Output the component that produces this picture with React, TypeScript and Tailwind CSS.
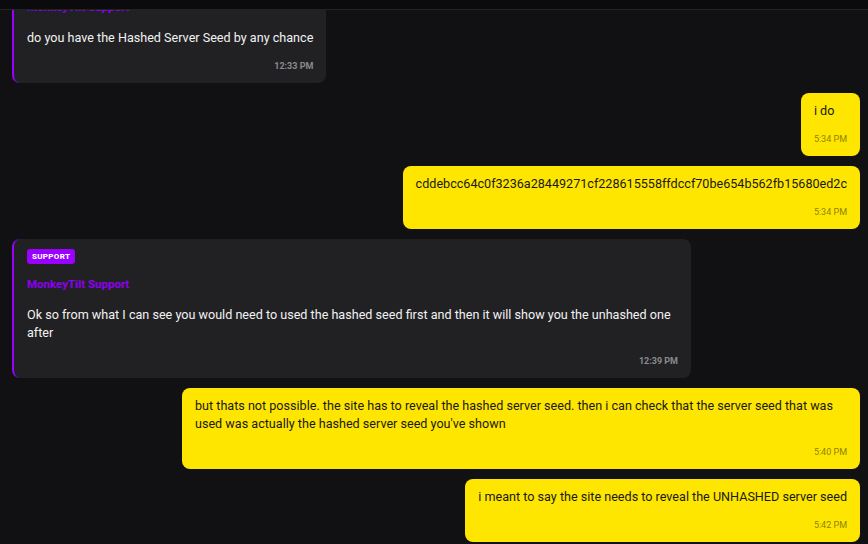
const font = { fontFamily: "Roboto, 'Noto Sans', sans-serif" };

type Msg = {
  side: "in" | "out";
  text: string;
  time: string;
  name?: string;
};

const messages: Msg[] = [
  {
    side: "in",
    name: "MonkeyTilt Support",
    text: "do you have the Hashed Server Seed by any chance",
    time: "12:33 PM",
  },
  { side: "out", text: "i do", time: "5:34 PM" },
  {
    side: "out",
    text: "cddebcc64c0f3236a28449271cf228615558ffdccf70be654b562fb15680ed2c",
    time: "5:34 PM",
  },
  {
    side: "in",
    name: "MonkeyTilt Support",
    text: "Ok so from what I can see you would need to used the hashed seed first and then it will show you the unhashed one after",
    time: "12:39 PM",
  },
  {
    side: "out",
    text: "but thats not possible. the site has to reveal the hashed server seed. then i can check that the server seed that was used was actually the hashed server seed you've shown",
    time: "5:40 PM",
  },
  {
    side: "out",
    text: "i meant to say the site needs to reveal the UNHASHED server seed",
    time: "5:42 PM",
  },
];

function Incoming({ m }: { m: Msg }) {
  return (
    <div className="flex justify-start pl-3">
      <div className="max-w-[679px] bg-[#212124] rounded-lg border-l-2 border-[#9900ff] pl-[13px] pr-[13px] pt-[10px] pb-3">
        <div className="flex">
          <span className="h-[15px] px-[5px] rounded-[3px] bg-[#9900ff] text-white text-[8px] font-extrabold leading-[15px] tracking-[0.3px]">
            SUPPORT
          </span>
        </div>
        <div className="mt-[11px] text-[#8c00f0] text-[11.5px] font-bold leading-[18px]">
          {m.name}
        </div>
        <p className="mt-[13px] text-[#f2f2f2] text-[12.6px] leading-[18px]">{m.text}</p>
        <div className="mt-[14px] text-right text-[#8a8a8e] text-[9px] font-bold leading-[10px]">
          {m.time}
        </div>
      </div>
    </div>
  );
}

function Outgoing({ m }: { m: Msg }) {
  return (
    <div className="flex justify-end pr-2">
      <div className="max-w-[678px] bg-[#ffe600] rounded-lg px-[13px] pt-[9px] pb-3">
        <p className="text-[#1a1a12] text-[12.6px] leading-[18px]">{m.text}</p>
        <div className="mt-[14px] text-right text-[#8f8200] text-[9px] leading-[10px]">
          {m.time}
        </div>
      </div>
    </div>
  );
}

export default function App() {
  return (
    <div className="w-[868px] h-[544px] bg-[#111113] overflow-hidden relative" style={font}>
      <div className="absolute top-0 left-0 right-0 h-[10px] bg-[#0b0b0d] border-b border-[#232327] z-10" />
      <div className="flex flex-col gap-[10px] -mt-[38px]">
        {messages.map((m, i) =>
          m.side === "in" ? <Incoming key={i} m={m} /> : <Outgoing key={i} m={m} />
        )}
      </div>
    </div>
  );
}
